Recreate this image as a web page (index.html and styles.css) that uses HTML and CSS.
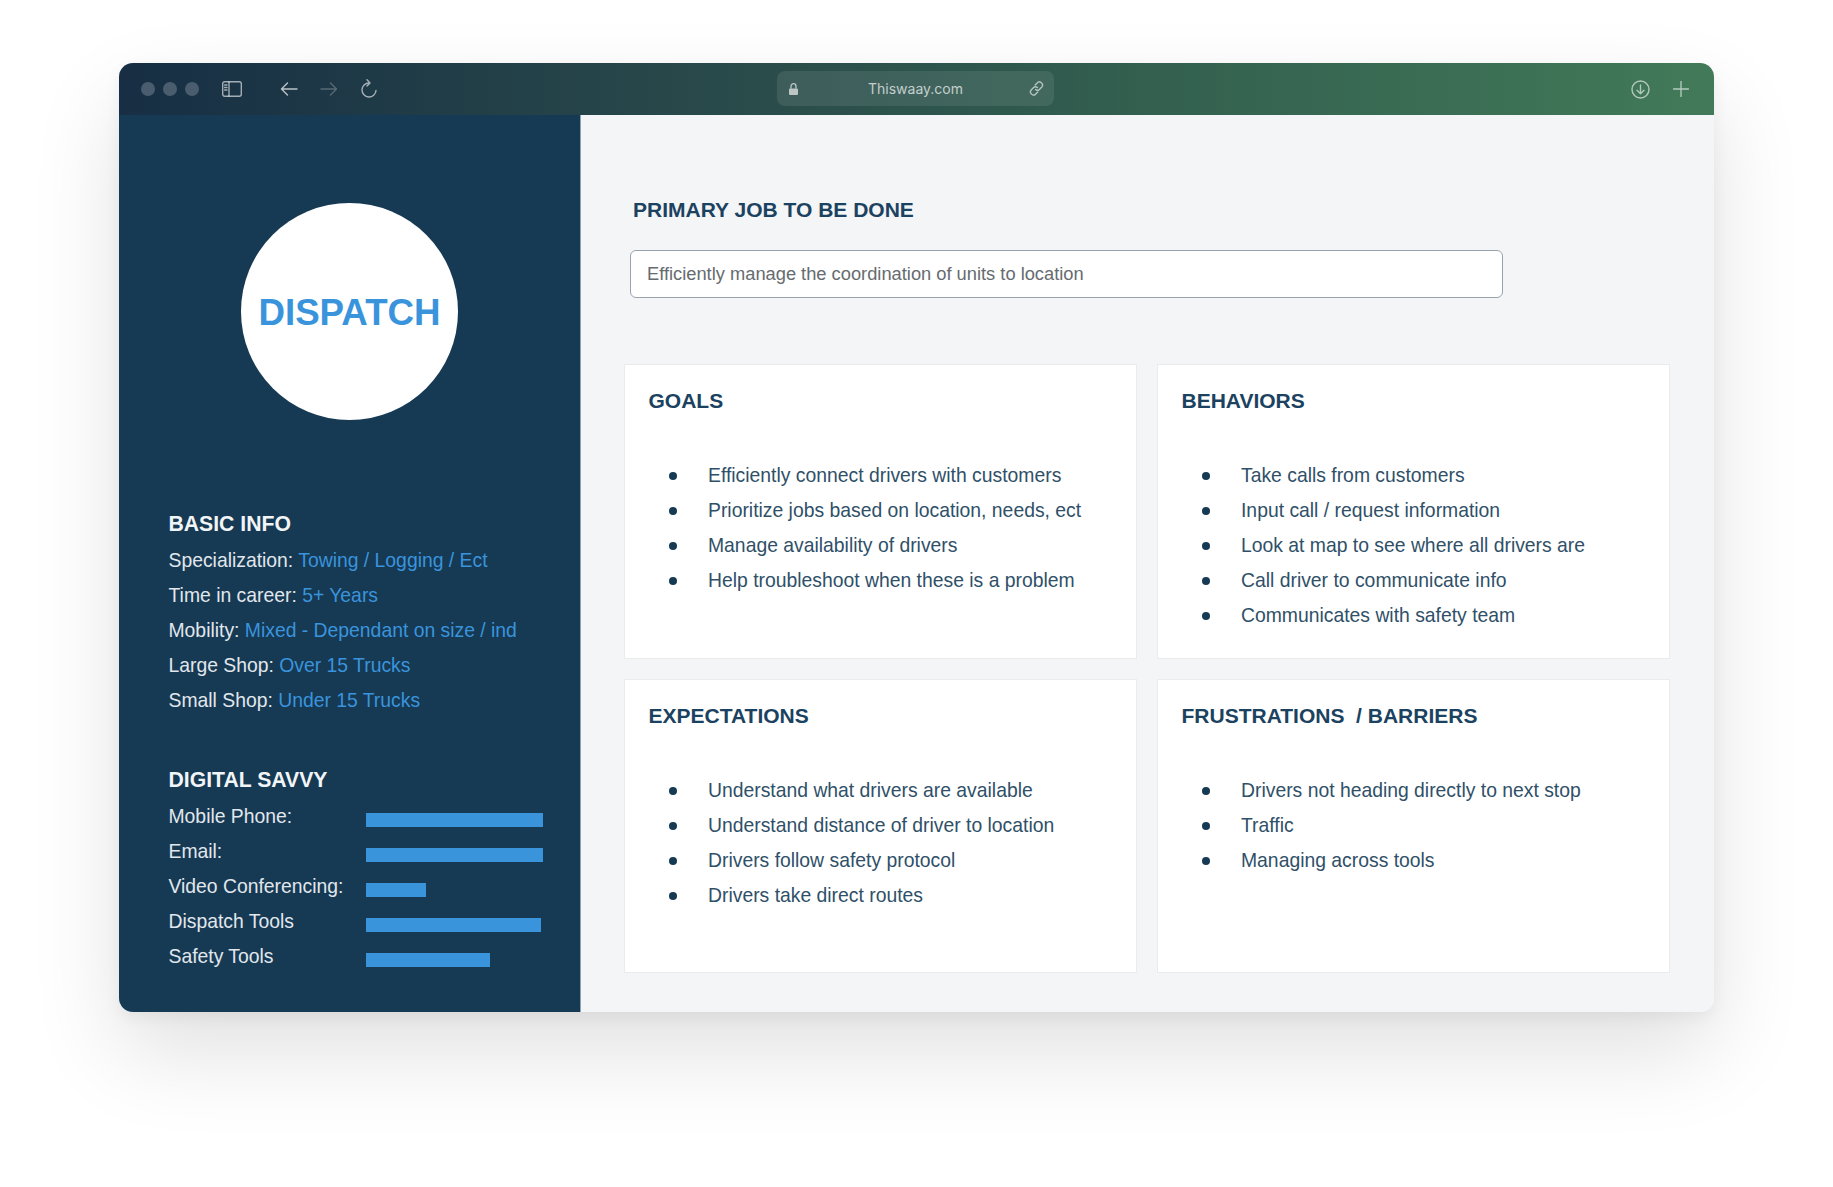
FILE: index.html
```html
<!DOCTYPE html>
<html lang="en">
<head>
<meta charset="utf-8">
<title>Dispatch persona</title>
<link rel="stylesheet" href="styles.css">
</head>
<body>
<div class="window">
  <header class="titlebar">
    <div class="tb-left">
      <span class="dots"><i></i><i></i><i></i></span>
      <svg class="ico sidebar-ico" width="20" height="16" viewBox="0 0 20 16"><rect x="0.7" y="0.7" width="18.6" height="14.6" rx="2"/><path d="M7 1v14M2.600 4h2.400M2.600 6.500h2.400M2.600 9h2.400"/></svg>
      <svg class="ico back" width="18" height="14" viewBox="0 0 18 14"><path d="M17 7H1.500M7.500 1 1.500 7l6 6"/></svg>
      <svg class="ico fwd" width="18" height="14" viewBox="0 0 18 14"><path d="M1 7h15.500M10.500 1l6 6-6 6"/></svg>
      <svg class="ico reload" width="16" height="20" viewBox="0 0 16 20"><path d="M8 4a7 7 0 1 0 7 7.500M6 .8 9 4 6 7"/></svg>
    </div>
    <div class="urlbar">
      <svg class="lock" width="9" height="12" viewBox="0 0 9 12"><path d="M1 5.500h7a1 1 0 0 1 1 1V11a1 1 0 0 1-1 1H1a1 1 0 0 1-1-1V6.500a1 1 0 0 1 1-1z"/><path class="shackle" d="M2 5.500V3.200a2.500 2.500 0 0 1 5 0v2.300"/></svg>
      <span class="url">Thiswaay.com</span>
      <svg class="ico link" width="15" height="15" viewBox="0 0 15 15"><path d="M6.200 4 8 2.200a2.700 2.700 0 0 1 4.800 3.800l-2.400 2.400a2.700 2.700 0 0 1-3.800 0M8.800 11 7 12.800A2.700 2.700 0 0 1 2.200 9l2.400-2.400a2.700 2.700 0 0 1 3.800 0"/></svg>
    </div>
    <div class="tb-right">
      <svg class="ico" width="19" height="19" viewBox="0 0 19 19"><circle cx="9.500" cy="9.500" r="8.500"/><path d="M9.500 5v8.500M6 10.200l3.500 3.500 3.500-3.500"/></svg>
      <svg class="ico" width="16" height="16" viewBox="0 0 16 16"><path d="M8 .5v15M.5 8h15"/></svg>
    </div>
  </header>
  <div class="content">
    <aside class="side">
      <div class="avatar">DISPATCH</div>
      <h2 class="side-title">BASIC INFO</h2>
      <ul class="info">
        <li>Specialization: <b>Towing / Logging / Ect</b></li>
        <li>Time in career: <b>5+ Years</b></li>
        <li>Mobility: <b>Mixed - Dependant on size / ind</b></li>
        <li>Large Shop: <b>Over 15 Trucks</b></li>
        <li>Small Shop: <b>Under 15 Trucks</b></li>
      </ul>
      <h2 class="side-title savvy-title">DIGITAL SAVVY</h2>
      <div class="savvy">
        <span>Mobile Phone:</span><div class="bar" style="width:177px"></div>
        <span>Email:</span><div class="bar" style="width:177px"></div>
        <span>Video Conferencing:</span><div class="bar" style="width:60px"></div>
        <span>Dispatch Tools</span><div class="bar" style="width:175px"></div>
        <span>Safety Tools</span><div class="bar" style="width:124px"></div>
      </div>
    </aside>
    <main class="main">
      <h1 class="job-title">PRIMARY JOB TO BE DONE</h1>
      <div class="job">Efficiently manage the coordination of units to location</div>
      <div class="cards">
        <section class="card">
          <h3>GOALS</h3>
          <ul>
            <li>Efficiently connect drivers with customers</li>
            <li>Prioritize jobs based on location, needs, ect</li>
            <li>Manage availability of drivers</li>
            <li>Help troubleshoot when these is a problem</li>
          </ul>
        </section>
        <section class="card">
          <h3>BEHAVIORS</h3>
          <ul>
            <li>Take calls from customers</li>
            <li>Input call / request information</li>
            <li>Look at map to see where all drivers are</li>
            <li>Call driver to communicate info</li>
            <li>Communicates with safety team</li>
          </ul>
        </section>
        <section class="card">
          <h3>EXPECTATIONS</h3>
          <ul>
            <li>Understand what drivers are available</li>
            <li>Understand distance of driver to location</li>
            <li>Drivers follow safety protocol</li>
            <li>Drivers take direct routes</li>
          </ul>
        </section>
        <section class="card">
          <h3>FRUSTRATIONS &nbsp;/ BARRIERS</h3>
          <ul>
            <li>Drivers not heading directly to next stop</li>
            <li>Traffic</li>
            <li>Managing across tools</li>
          </ul>
        </section>
      </div>
    </main>
  </div>
</div>
</body>
</html>
```

FILE: styles.css
```css
* { box-sizing: border-box; }
html, body { margin: 0; height: 100%; }
body {
  background: #fff;
  font-family: "Liberation Sans", Arial, sans-serif;
  padding: 63px 119px 0;
  overflow: hidden;
}
.window {
  width: 1595px;
  height: 949px;
  border-radius: 14px;
  overflow: hidden;
  display: flex;
  flex-direction: column;
  box-shadow: 0 40px 90px rgba(0,0,0,.12), 0 6px 16px rgba(0,0,0,.05);
}
.titlebar {
  height: 52px;
  flex: none;
  display: flex;
  align-items: center;
  background: linear-gradient(90deg, #172e44 0%, #28484a 35%, #33604f 65%, #427a59 100%);
  position: relative;
}
.tb-left { display: flex; align-items: center; padding-left: 22px; }
.dots { display: flex; gap: 8px; margin-right: 23px; }
.dots i { width: 14px; height: 14px; border-radius: 50%; background: #4a5d6e; display: block; }
.ico { fill: none; stroke: rgba(255,255,255,.6); stroke-width: 1.4; stroke-linecap: round; stroke-linejoin: round; display: block; }
.back { margin-left: 38px; stroke: rgba(255,255,255,.7); }
.fwd { margin-left: 22px; stroke: rgba(255,255,255,.25); }
.reload { margin-left: 23px; }
.urlbar {
  position: absolute;
  left: 658px;
  top: 8px;
  width: 277px;
  height: 35px;
  border-radius: 8px;
  background: rgba(255,255,255,.09);
  display: flex;
  align-items: center;
  justify-content: space-between;
  padding: 0 10px 0 12px;
}
.lock { fill: rgba(255,255,255,.65); }
.lock .shackle { fill: none; stroke: rgba(255,255,255,.65); stroke-width: 1.3; }
.url { font: 14px "Inter", "Liberation Sans", sans-serif; color: rgba(255,255,255,.7); margin-left: 4px; }
.tb-right { margin-left: auto; display: flex; align-items: center; gap: 23px; padding-right: 25px; }
.content { flex: 1; display: flex; min-height: 0; }
.side {
  width: 462px;
  flex: none;
  background: #163954;
  border-right: 1px solid #8ea3b3;
  padding: 88px 0 0 49.5px;
  color: #e1e7ec;
  font-size: 19.35px;
}
.avatar {
  width: 217px;
  height: 217px;
  margin-left: 72.5px;
  padding-top: 2px;
  border-radius: 50%;
  background: #fff;
  color: #3a94dc;
  font-size: 36.7px;
  font-weight: 700;
  display: flex;
  align-items: center;
  justify-content: center;
}
.side-title {
  margin: 92px 0 0;
  font-size: 21.2px;
  font-weight: 700;
  line-height: 24px;
  color: #f2f5f7;
}
.info { list-style: none; margin: 7px 0 0; padding: 0; }
.info li { height: 35px; line-height: 35px; }
.info b { font-weight: 400; color: #3a94dc; }
.savvy-title { margin-top: 50px; }
.savvy {
  margin-top: 7px;
  display: grid;
  grid-template-columns: 197px 1fr;
  grid-auto-rows: 35px;
  align-items: center;
}
.bar { height: 14px; background: #3a94dc; margin-top: 7px; }
.main {
  flex: 1;
  background: #f3f5f7;
  padding: 0 43px;
  color: #163954;
}
.job-title {
  margin: 83px 0 0 9px;
  font-size: 21px;
  line-height: 24px;
  font-weight: 700;
  color: #1b4260;
}
.job {
  margin: 28px 0 0 6px;
  width: 873px;
  height: 48px;
  border: 1px solid #98a3ad;
  border-radius: 6px;
  background: #fff;
  padding-left: 16px;
  line-height: 46px;
  font-size: 18.3px;
  color: #666b70;
}
.cards {
  margin-top: 66px;
  display: grid;
  grid-template-columns: 513px 513px;
  grid-template-rows: 294.5px 294.5px;
  gap: 20px;
}
.card {
  background: #fff;
  border: 1px solid #e9ebed;
  padding: 24px 23.5px 0;
}
.card h3 {
  margin: 0;
  font-size: 21px;
  line-height: 24px;
  font-weight: 700;
  color: #1b4260;
}
.card ul { list-style: none; margin: 45px 0 0 .5px; padding: 0; }
.card li {
  position: relative;
  height: 35px;
  line-height: 35px;
  padding-left: 59px;
  font-size: 19.35px;
  color: #2f5068;
}
.card li::before {
  content: "";
  position: absolute;
  left: 20px;
  top: 14px;
  width: 8px;
  height: 8px;
  border-radius: 50%;
  background: #163954;
}
```
